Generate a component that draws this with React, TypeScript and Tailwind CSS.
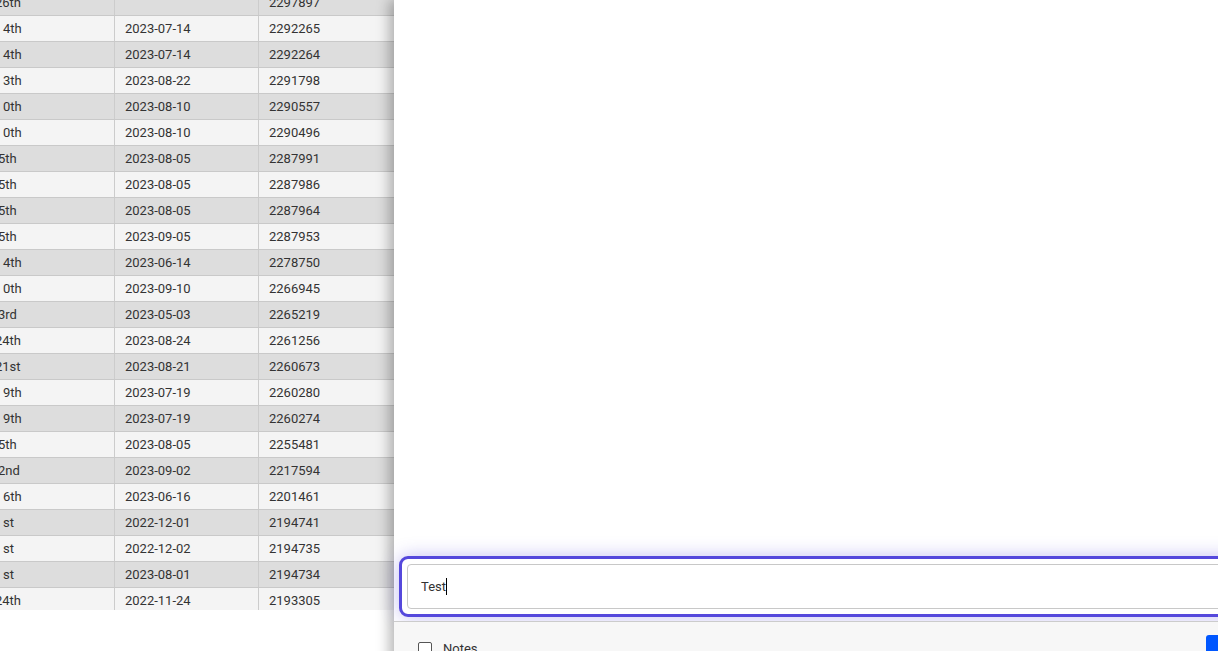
const rows: { day: string; shift: 'a' | 'b' | 'c'; date: string; id: string }[] = [
  { day: '26th', shift: 'c', date: '', id: '2297897' },
  { day: '4th', shift: 'a', date: '2023-07-14', id: '2292265' },
  { day: '4th', shift: 'a', date: '2023-07-14', id: '2292264' },
  { day: '3th', shift: 'a', date: '2023-08-22', id: '2291798' },
  { day: '0th', shift: 'a', date: '2023-08-10', id: '2290557' },
  { day: '0th', shift: 'a', date: '2023-08-10', id: '2290496' },
  { day: '5th', shift: 'b', date: '2023-08-05', id: '2287991' },
  { day: '5th', shift: 'b', date: '2023-08-05', id: '2287986' },
  { day: '5th', shift: 'b', date: '2023-08-05', id: '2287964' },
  { day: '5th', shift: 'b', date: '2023-09-05', id: '2287953' },
  { day: '4th', shift: 'a', date: '2023-06-14', id: '2278750' },
  { day: '0th', shift: 'a', date: '2023-09-10', id: '2266945' },
  { day: '3rd', shift: 'b', date: '2023-05-03', id: '2265219' },
  { day: '24th', shift: 'c', date: '2023-08-24', id: '2261256' },
  { day: '21st', shift: 'c', date: '2023-08-21', id: '2260673' },
  { day: '9th', shift: 'a', date: '2023-07-19', id: '2260280' },
  { day: '9th', shift: 'a', date: '2023-07-19', id: '2260274' },
  { day: '5th', shift: 'b', date: '2023-08-05', id: '2255481' },
  { day: '2nd', shift: 'b', date: '2023-09-02', id: '2217594' },
  { day: '6th', shift: 'a', date: '2023-06-16', id: '2201461' },
  { day: 'st', shift: 'a', date: '2022-12-01', id: '2194741' },
  { day: 'st', shift: 'a', date: '2022-12-02', id: '2194735' },
  { day: 'st', shift: 'a', date: '2023-08-01', id: '2194734' },
  { day: '24th', shift: 'c', date: '2022-11-24', id: '2193305' },
]

const shiftClass = {
  a: '',
  b: '-ml-[5px]',
  c: '-ml-[8px]',
}

function Table() {
  return (
    <div className="w-[394px] shrink-0 h-[610px] overflow-hidden">
      <div className="-mt-[10px]">
        {rows.map((r, i) => (
          <div
            key={i}
            className={`grid grid-cols-[115px_144px_1fr] h-[26px] border-b border-[#c9c9c9] ${i % 2 === 0 ? 'bg-[#dddddd]' : 'bg-[#f4f4f4]'}`}
          >
            <div className="border-r border-[#cccccc] pl-[3px] flex items-center overflow-hidden whitespace-nowrap">
              <span className={shiftClass[r.shift]}>{r.day}</span>
            </div>
            <div className="border-r border-[#cccccc] pl-[10px] flex items-center">{r.date}</div>
            <div className="pl-[10px] flex items-center">{r.id}</div>
          </div>
        ))}
      </div>
    </div>
  )
}

function ComposePanel() {
  return (
    <div className="relative z-10 w-[900px] shrink-0 h-[680px] bg-white flex flex-col shadow-[-5px_0_12px_rgba(0,0,0,0.28)]">
      <div className="flex-1" />
      <div className="px-[5px] mb-[4px]">
        <div className="border-[3px] border-[#5548dc] rounded-[9px] p-[5px] bg-white shadow-[0_0_18px_rgba(85,72,220,0.35)]">
          <div className="h-[45px] border border-[#c8c8c8] rounded-[4px] bg-white flex items-center pl-[13px] text-[13px] text-[#333]">
            <span>Test</span>
            <span className="w-px h-[17px] bg-black" />
          </div>
        </div>
      </div>
      <div className="h-[59px] border-t border-[#cccccc] bg-[#f7f7f7] flex items-start pl-[24px] pr-[12px]">
        <label className="flex items-center gap-[11px] mt-[17px] text-[13px] text-[#333]">
          <span className="w-[14px] h-[14px] border-[1.5px] border-[#555] rounded-[2px] bg-white" />
          Notes
        </label>
        <button className="ml-auto mt-[13px] w-[76px] h-[32px] rounded-[3px] bg-[#0057ff] text-white text-[13px] font-medium">
          Save
        </button>
      </div>
    </div>
  )
}

export default function App() {
  return (
    <div className="w-[1218px] h-[651px] overflow-hidden bg-white flex font-['Roboto',sans-serif] text-[13px] text-[#333]">
      <Table />
      <ComposePanel />
    </div>
  )
}
